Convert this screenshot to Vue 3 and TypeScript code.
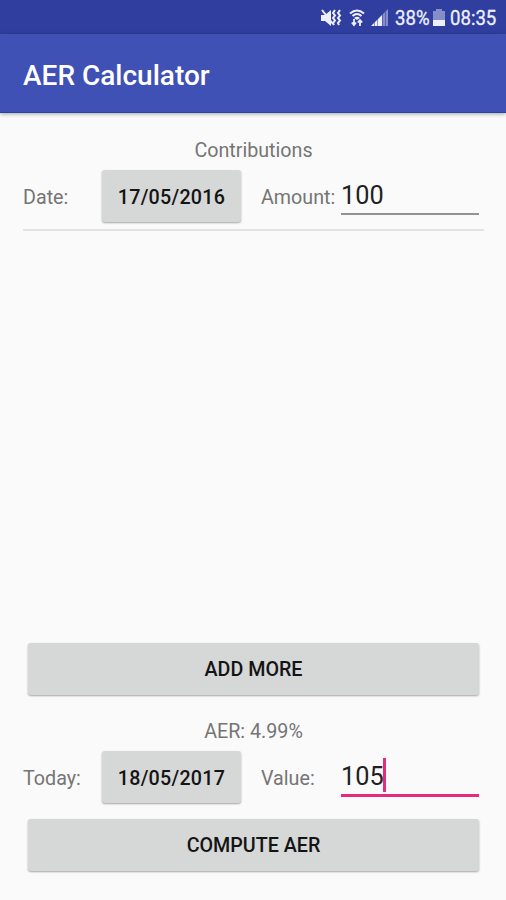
<script setup lang="ts">
import { computed, ref } from 'vue'

interface Contribution {
  date: string
  amount: number
}

const contributions = ref<Contribution[]>([{ date: '17/05/2016', amount: 100 }])
const today = ref('18/05/2017')
const value = ref(105)
const rate = ref(4.99)
const rateText = computed(() => `AER: ${rate.value.toFixed(2)}%`)

function addMore(): void {
  contributions.value.push({ date: today.value, amount: 0 })
}

function toDate(text: string): number {
  const [d, m, y] = text.split('/').map(Number)
  return Date.UTC(y, m - 1, d)
}

function computeRate(): void {
  const first = contributions.value[0]
  const years = (toDate(today.value) - toDate(first.date)) / (365.25 * 86400000)
  const total = contributions.value.reduce((sum, c) => sum + c.amount, 0)
  if (years > 0 && total > 0) {
    rate.value = ((value.value / total) ** (1 / years) - 1) * 100
  }
}
</script>

<template>
  <div class="screen">
    <div class="status">
      <svg class="mute" width="22" height="18" viewBox="0 0 22 18">
        <path d="M1 6h4l6-5v16l-6-5H1z" fill="currentColor" />
        <path d="M2 1l11 14" fill="none" stroke="currentColor" stroke-width="2" />
        <path d="M15 1l-2 3 2 2.500-2 2.500 2 2.500-2 2.500 1 2M20 1l-2 3 2 2.500-2 2.500 2 2.500-2 2.500 1 2" fill="none" stroke="currentColor" stroke-width="2" />
      </svg>
      <svg class="wifi" width="16" height="18" viewBox="0 0 16 18">
        <path d="M1 4.500Q8-1.500 15 4.500M3.500 7Q8 3 12.500 7" fill="none" stroke="currentColor" stroke-width="2.100" />
        <path d="M5 9q3-2.500 6 0L8 11z" fill="currentColor" />
        <path d="M5 10v6M2.800 13.500L5 16l2-2.500M11 17v-6M8.800 13.500L11 11l2.200 2.500" fill="none" stroke="currentColor" stroke-width="1.800" />
      </svg>
      <svg class="signal" width="18" height="18" viewBox="0 0 18 18">
        <path d="M0 17l3-3v3zM3.500 17v-3.500l3-3V17zM7 17v-7l4-4v11z" fill="currentColor" />
        <path d="M11.500 17V5.500l2.500-2.500v14zM14.500 17V2.500L17 0v17z" fill="currentColor" opacity=".45" />
      </svg>
      <span class="percent">38%</span>
      <svg class="battery" width="12" height="18" viewBox="0 0 12 18">
        <path d="M3 0h6v2h3v9H0V2h3z" fill="currentColor" opacity=".45" />
        <path d="M0 11h12v6H0z" fill="currentColor" />
      </svg>
      <span class="time">08:35</span>
    </div>
    <header class="appbar"><h1>AER Calculator</h1></header>
    <main class="content">
      <h2 class="caption">Contributions</h2>
      <section class="list">
        <div v-for="(item, index) in contributions" :key="index" class="row entry">
          <span class="label">Date:</span>
          <button class="btn date">{{ item.date }}</button>
          <span class="label second">Amount:</span>
          <div class="field"><span>{{ item.amount }}</span></div>
        </div>
      </section>
      <button class="btn wide" @click="addMore">ADD MORE</button>
      <p class="caption result">{{ rateText }}</p>
      <div class="row">
        <span class="label">Today:</span>
        <button class="btn date">{{ today }}</button>
        <span class="label second">Value:</span>
        <div class="field focused"><span>{{ value }}</span><i class="caret"></i></div>
      </div>
      <button class="btn wide compute" @click="computeRate">COMPUTE AER</button>
    </main>
  </div>
</template>

<style>
body {
  margin: 0;
  background: #fafafa;
}
</style>

<style scoped>
.screen {
  display: flex;
  flex-direction: column;
  height: 900px;
  box-sizing: border-box;
  background: #fafafa;
  font-family: Roboto, sans-serif;
  color: #757575;
  font-size: 19.7px;
  overflow: hidden;
}
.status {
  flex: none;
  display: flex;
  align-items: center;
  justify-content: flex-end;
  height: 34px;
  padding: 2px 9px 0 0;
  box-sizing: border-box;
  background: #303f9f;
  color: #eef0ff;
  font-size: 20px;
  line-height: 32px;
}
.status svg {
  flex: none;
}
.mute {
  margin-right: 3px;
}
.wifi {
  margin-left: 4px;
}
.signal {
  margin-left: 6px;
}
.percent {
  width: 35px;
  margin-left: 6px;
}
.percent,
.time {
  display: inline-block;
  white-space: nowrap;
  transform: scaleX(0.93);
  transform-origin: left center;
  -webkit-text-stroke: 0.3px currentColor;
}
.battery {
  margin-left: 3px;
}
.time {
  width: 47px;
  margin-left: 5px;
}
.appbar {
  flex: none;
  display: flex;
  align-items: center;
  height: 79px;
  padding: 6px 23px 0;
  box-sizing: border-box;
  background: #3f51b5;
  border-bottom: 1px solid #2c43a5;
  box-shadow: 0 1px 4px rgba(0, 0, 0, 0.35);
  color: #fff;
}
h1 {
  margin: 0;
  font-size: 28px;
  font-weight: 500;
  line-height: 36px;
}
.content {
  flex: 1;
  display: flex;
  flex-direction: column;
  padding: 26px 22px 29px 23px;
}
.caption {
  margin: 0;
  font-size: 19.7px;
  font-weight: 400;
  line-height: 24px;
  text-align: center;
}
.list {
  flex: 1;
  margin-top: -1px;
}
.row {
  display: flex;
  align-items: center;
  height: 68px;
}
.entry {
  height: 67px;
  border-bottom: 2px solid #e3e3e3;
}
.label {
  width: 79px;
  padding-top: 3px;
  line-height: 24px;
  white-space: nowrap;
}
.entry .label {
  padding-top: 5px;
}
.second {
  width: 80px;
  margin-left: 20px;
}
.btn {
  flex: none;
  height: 52px;
  padding: 0;
  border: 0;
  border-radius: 3px;
  background: #d6d7d7;
  box-shadow: 0 1px 2px rgba(0, 0, 0, 0.34);
  color: #141414;
  font-family: inherit;
  font-size: 19.7px;
  font-weight: 500;
}
.date {
  width: 139px;
  padding-top: 2px;
  letter-spacing: 0.25px;
}
.entry .date {
  padding-top: 3px;
}
.wide {
  margin: 0 5px;
}
.result {
  margin: 25px 0 -1px;
}
.field {
  display: flex;
  align-items: center;
  width: 138px;
  height: 34px;
  padding-top: 2px;
  border-bottom: 2px solid #929292;
  color: #212121;
  font-size: 25.3px;
  line-height: 34px;
}
.field.focused {
  height: 34px;
  padding-top: 2px;
  border-bottom: 3px solid #e52b79;
}
.caret {
  width: 3px;
  height: 34px;
  margin: -4px 0 0 -1px;
  background: #e52b79;
}
.compute {
  margin-top: 8px;
}
</style>
